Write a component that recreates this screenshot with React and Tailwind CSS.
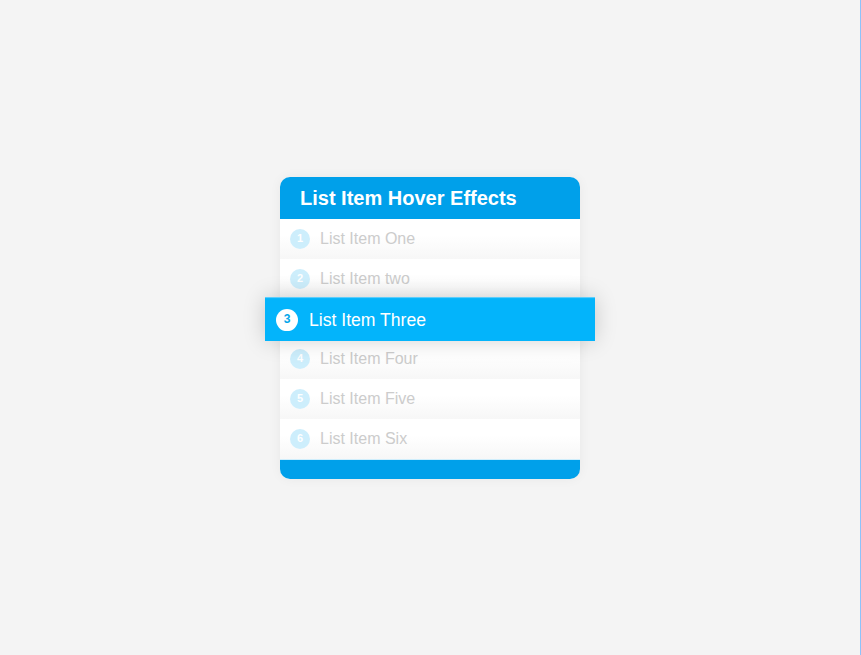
const items = ['List Item One', 'List Item two', 'List Item Three', 'List Item Four', 'List Item Five', 'List Item Six'];

export default function App() {
  return (
    <div className="w-[861px] h-[655px] bg-[#f4f4f4] border-r border-[#8ec3fb] flex items-center justify-center font-['Liberation_Sans',Arial,sans-serif]">
      <div className="w-[300px] rounded-[10px] bg-white shadow-[0_0_12px_rgba(0,0,0,0.05)]">
        <div className="h-[42px] bg-[#00a0ea] rounded-t-[10px] flex items-center pl-5">
          <h1 className="text-[20px] font-bold text-white">List Item Hover Effects</h1>
        </div>
        <ul>
          {items.map((label, i) =>
            i === 2 ? (
              <li
                key={label}
                className="relative z-10 h-10 scale-110 bg-[#03b4fb] border-t border-[#5ccdfb] flex items-center gap-[10px] pl-[10px] shadow-[0_0_20px_rgba(0,0,0,0.18)]"
              >
                <span className="w-5 h-5 rounded-full bg-white text-[#03a6ea] text-[11px] font-bold flex items-center justify-center">
                  {i + 1}
                </span>
                <span className="text-[16px] text-white">{label}</span>
              </li>
            ) : (
              <li
                key={label}
                className="h-10 bg-gradient-to-b from-white from-40% to-[#f7f7f7] flex items-center gap-[10px] pl-[10px]"
              >
                <span className="w-5 h-5 rounded-full bg-[#cdeefc] text-white text-[11px] font-bold flex items-center justify-center">
                  {i + 1}
                </span>
                <span className="text-[16px] text-[#cccccc]">{label}</span>
              </li>
            )
          )}
        </ul>
        <div className="h-5 bg-[#00a0ea] rounded-b-[10px] border-t border-[#cfeefc]" />
      </div>
    </div>
  );
}
